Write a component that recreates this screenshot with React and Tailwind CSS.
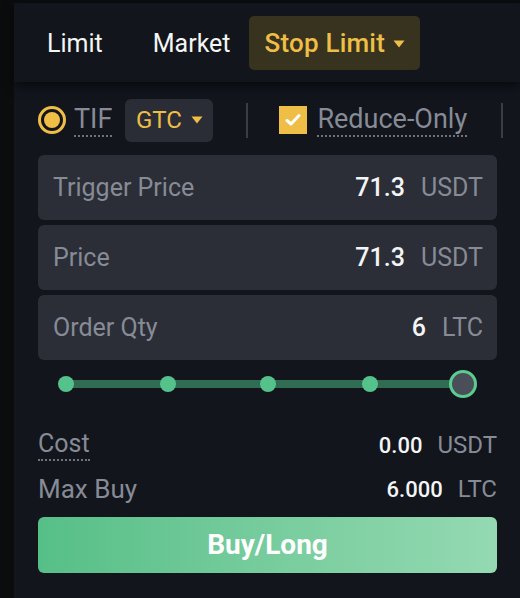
import React from "react";

const Caret = ({ className = "" }) => (
  <svg width="12" height="8" viewBox="0 0 12 8" className={className}>
    <path d="M0.5 0.5 H11.5 L6 7.5 Z" fill="currentColor" />
  </svg>
);

const Field = ({ label, value, unit }) => (
  <div className="flex h-[65px] items-center justify-between rounded-[6px] bg-[#2b2e36] pl-[15px] pr-[14px]">
    <span className="text-[25px] text-[#868b96]">{label}</span>
    <div className="flex items-center gap-[16px]">
      <span className="text-[25px] font-medium text-[#f3f4f6]">{value}</span>
      <span className="text-[25px] text-[#868b96]">{unit}</span>
    </div>
  </div>
);

export default function App() {
  return (
    <div
      className="flex h-[598px] w-[520px] flex-col overflow-hidden bg-[#0b0c0e] pl-[14px] pt-[3px]"
      style={{ fontFamily: "Roboto, 'Liberation Sans', sans-serif" }}
    >
      <div className="flex flex-1 flex-col bg-[#12151c]">
        {/* Tabs */}
        <div className="relative z-10 flex h-[79px] shrink-0 items-center bg-[#12151c] shadow-[0_4px_10px_rgba(0,0,0,0.55)]">
          <span className="ml-[33px] pt-[2px] text-[25px] text-[#f5f5f5]">Limit</span>
          <span className="ml-[50px] pt-[2px] text-[25px] text-[#f5f5f5]">Market</span>
          <div className="ml-[18px] flex h-[54px] w-[171px] items-center gap-[8px] rounded-[5px] bg-[#37331f] pl-[16px] pt-[2px]">
            <span className="text-[26px] font-medium tracking-[0.2px] text-[#efbe46]">Stop Limit</span>
            <Caret className="text-[#efbe46]" />
          </div>
        </div>

        {/* Body */}
        <div className="flex flex-col pl-[24px] pr-[23px]">
          {/* Options row */}
          <div className="mt-[16px] flex h-[44px] items-center">
            <div className="flex h-[28px] w-[28px] shrink-0 items-center justify-center rounded-full border-[3px] border-[#efbe46]">
              <div className="h-[16px] w-[16px] rounded-full bg-[#efbe46]" />
            </div>
            <span className="ml-[8px] shrink-0 border-b-2 border-dotted border-[#6f737c] pb-[1px] text-[27px] leading-[30px] text-[#868b96]">
              TIF
            </span>
            <div className="ml-[13px] flex h-[43px] w-[88px] shrink-0 items-center justify-center gap-[9px] rounded-[6px] bg-[#2a2d35]">
              <span className="text-[24px] text-[#efbe46]">GTC</span>
              <Caret className="text-[#efbe46]" />
            </div>
            <div className="ml-[33px] h-[35px] w-[2px] shrink-0 bg-[#3a3d45]" />
            <div className="ml-[31px] flex h-[28px] w-[28px] shrink-0 items-center justify-center bg-[#efbe46]">
              <svg width="16" height="14" viewBox="0 0 16 14">
                <path d="M2 7.5 L6 11 L14 2.5" fill="none" stroke="#ffffff" strokeWidth="3" strokeLinecap="round" strokeLinejoin="round" />
              </svg>
            </div>
            <span className="ml-[10px] shrink-0 border-b-2 border-dotted border-[#6f737c] pb-[1px] text-[27px] leading-[30px] text-[#868b96]">
              Reduce-Only
            </span>
            <div className="ml-[34px] h-[35px] w-[2px] shrink-0 bg-[#3a3d45]" />
          </div>

          {/* Fields */}
          <div className="mt-[13px] flex flex-col gap-[5px]">
            <Field label="Trigger Price" value="71.3" unit="USDT" />
            <Field label="Price" value="71.3" unit="USDT" />
            <Field label="Order Qty" value="6" unit="LTC" />
          </div>

          {/* Slider */}
          <div className="flex h-[48px] items-center">
            <div className="relative ml-[28px] h-[28px] w-[397px]">
              <div className="absolute left-0 right-0 top-[10px] h-[8px] bg-[#2f6c51]" />
              <div className="absolute left-[-8px] top-[6px] h-[16px] w-[16px] rounded-full bg-[#55c28b]" />
              <div className="absolute left-[94px] top-[6px] h-[16px] w-[16px] rounded-full bg-[#55c28b]" />
              <div className="absolute left-[194px] top-[6px] h-[16px] w-[16px] rounded-full bg-[#55c28b]" />
              <div className="absolute left-[296px] top-[6px] h-[16px] w-[16px] rounded-full bg-[#55c28b]" />
              <div className="absolute left-[383px] top-0 h-[28px] w-[28px] rounded-full border-[3px] border-[#5ccb8f] bg-[#4a4e58]" />
            </div>
          </div>

          {/* Summary */}
          <div className="mt-[15px] flex h-[44px] items-center justify-between">
            <span className="border-b-2 border-dotted border-[#6f737c] text-[25px] leading-[30px] text-[#868b96]">Cost</span>
            <div className="flex items-center gap-[15px]">
              <span className="text-[22px] font-medium text-[#f3f4f6]">0.00</span>
              <span className="text-[24px] text-[#868b96]">USDT</span>
            </div>
          </div>
          <div className="flex h-[44px] items-center justify-between">
            <span className="text-[26px] text-[#868b96]">Max Buy</span>
            <div className="flex items-center gap-[15px]">
              <span className="text-[22px] font-medium text-[#f3f4f6]">6.000</span>
              <span className="text-[24px] text-[#868b96]">LTC</span>
            </div>
          </div>

          <div className="mt-[6px] flex h-[56px] items-center justify-center rounded-[6px] bg-gradient-to-r from-[#56bf88] to-[#94d9b2]">
            <span className="text-[28px] font-bold text-white">Buy/Long</span>
          </div>
        </div>
      </div>
    </div>
  );
}
